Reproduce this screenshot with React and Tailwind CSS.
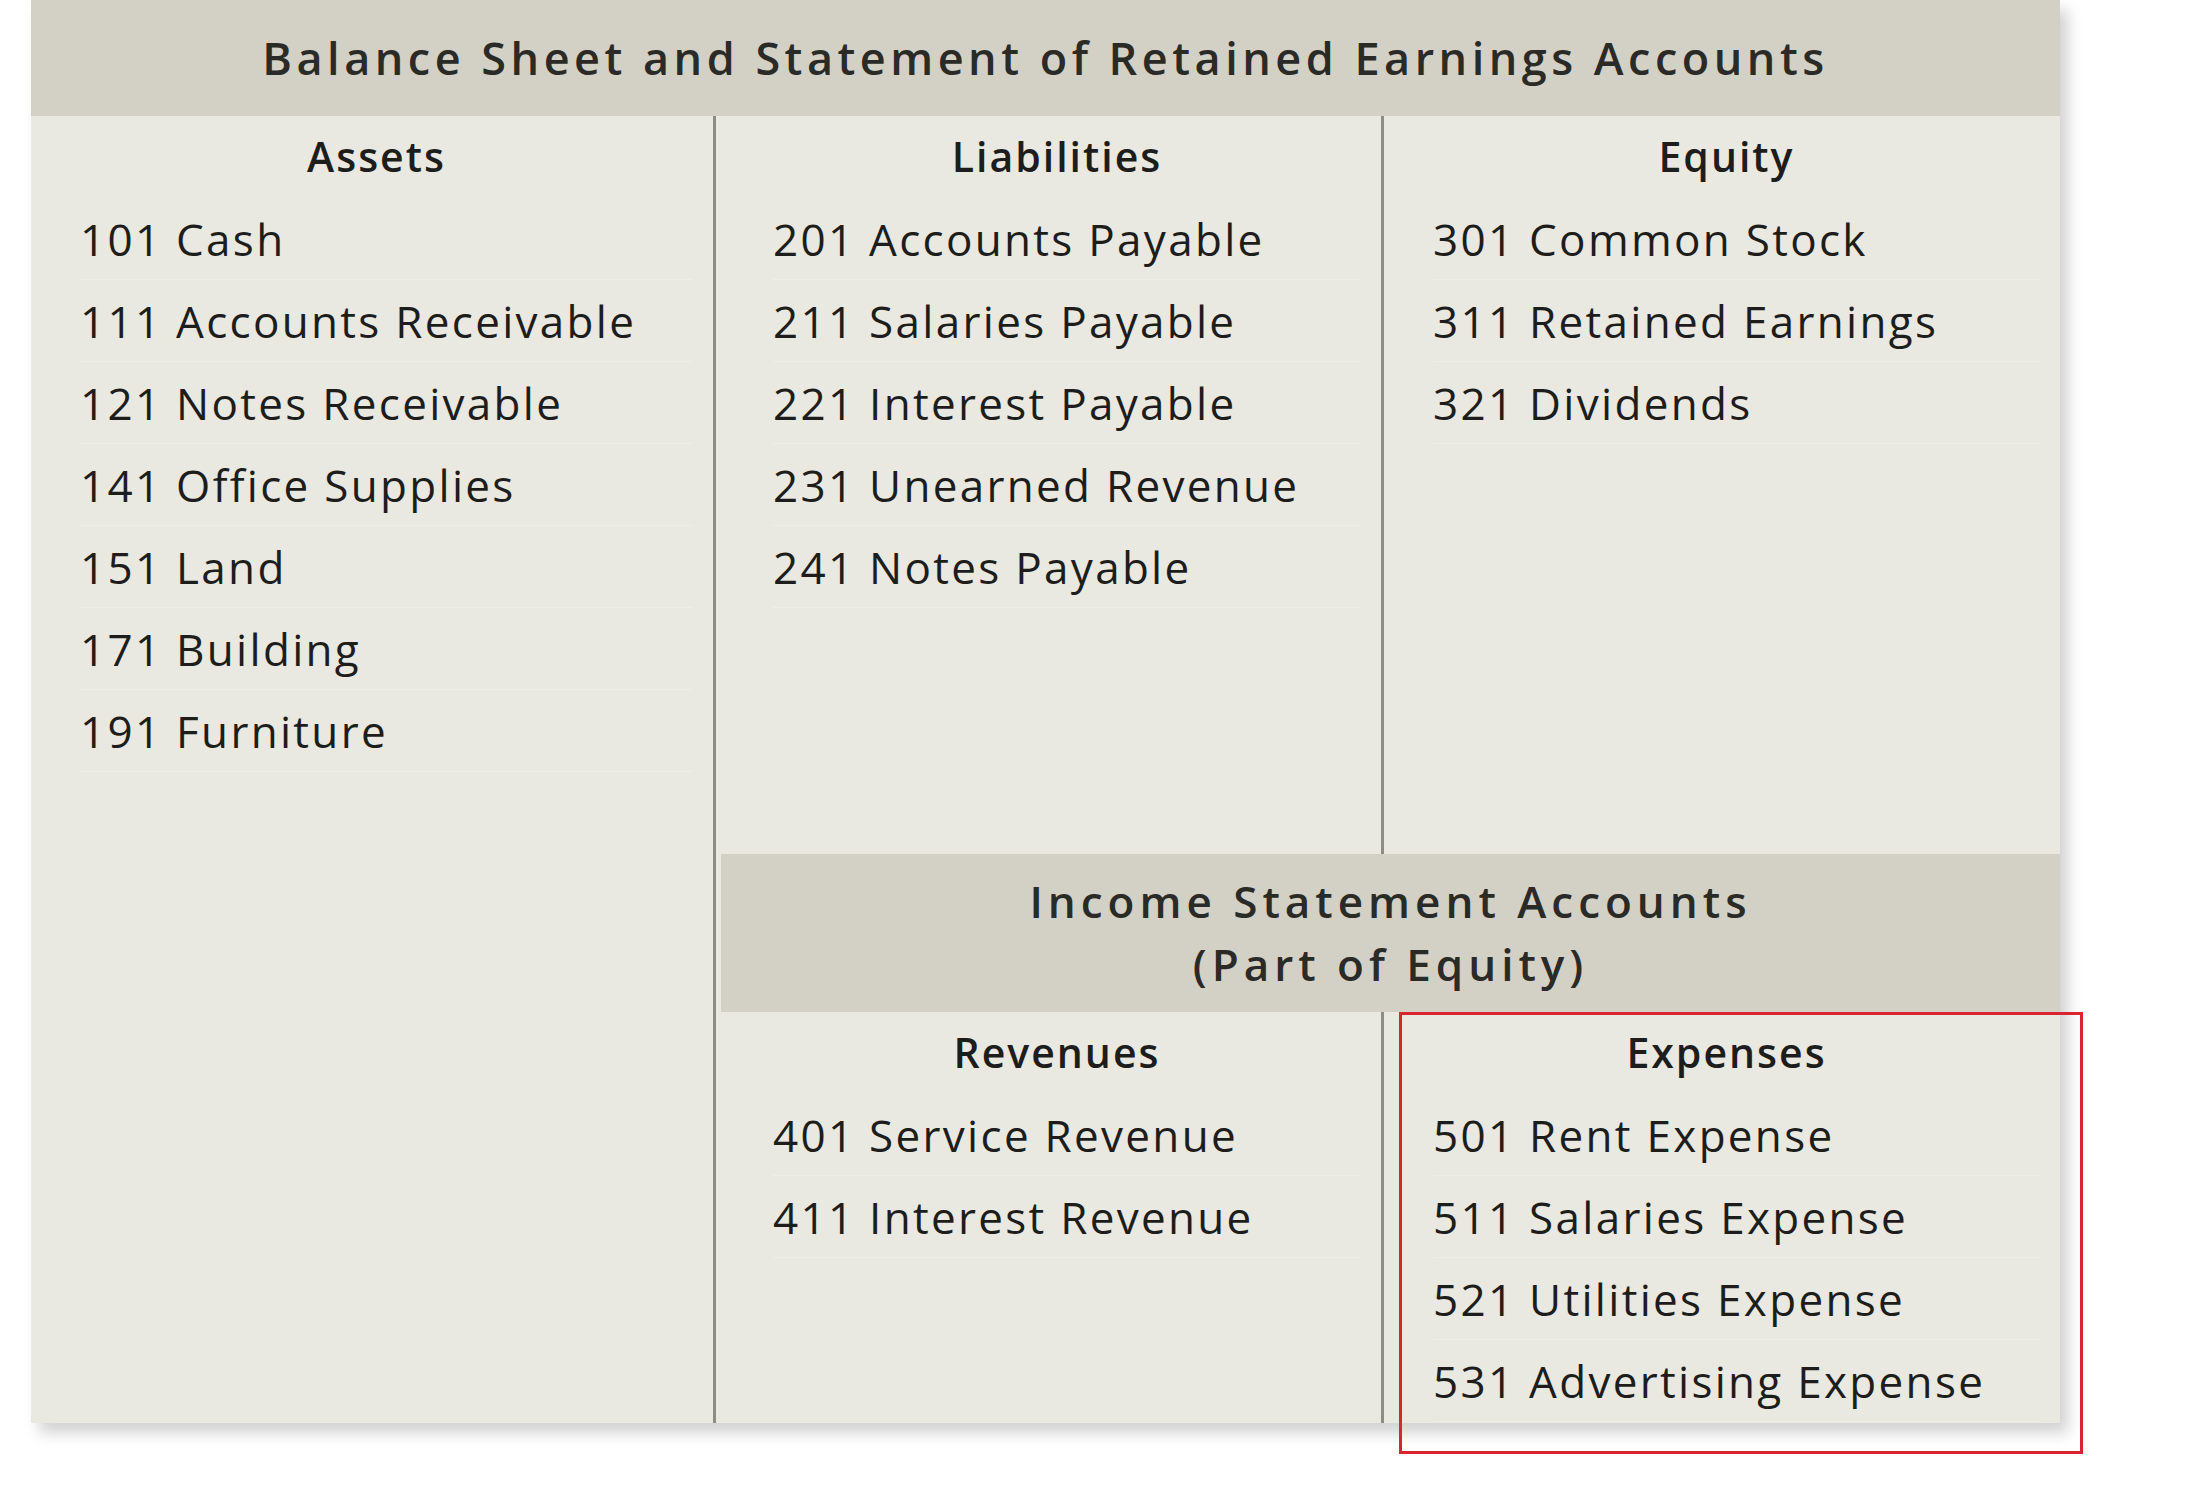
import React from "react";

const F = { fontFamily: '"Open Sans", "Noto Sans", sans-serif' };

function Col({ title, items, pl }) {
  return (
    <div className={`flex flex-col ${pl}`}>
      <div className="h-[82px] flex items-center justify-center font-semibold text-[41px] tracking-[2px] text-[#1d1d1b] pr-[20px]">{title}</div>
      {items.map((t) => (
        <div key={t} className="h-[82px] flex items-center text-[44px] tracking-[2.3px] text-[#1d1d1b] border-b border-[#eeede7]">{t}</div>
      ))}
    </div>
  );
}

export default function App() {
  return (
    <div className="w-[2210px] h-[1488px] bg-white relative" style={F}>
      <div className="absolute left-[31px] top-0 w-[2029px] shadow-[8px_10px_14px_rgba(0,0,0,0.18)] bg-[#e9e8e1]">
        <div className="h-[116px] bg-[#d3d0c6] flex items-center justify-center text-[45px] font-semibold text-[#2a2a27] tracking-[4.5px]">
          Balance Sheet and Statement of Retained Earnings Accounts
        </div>
        <div className="grid grid-cols-[685px_1344px]">
          <div className="h-[1307px] border-r-[3px] border-[#8d8c87]">
            <Col title="Assets" pl="pl-[49px] pr-[20px]" items={["101 Cash","111 Accounts Receivable","121 Notes Receivable","141 Office Supplies","151 Land","171 Building","191 Furniture"]} />
          </div>
          <div className="flex flex-col">
            <div className="h-[738px] grid grid-cols-[668px_676px]">
              <div className="border-r-[3px] border-[#8d8c87]">
                <Col title="Liabilities" pl="pl-[57px] pr-[20px]" items={["201 Accounts Payable","211 Salaries Payable","221 Interest Payable","231 Unearned Revenue","241 Notes Payable"]} />
              </div>
              <Col title="Equity" pl="pl-[49px] pr-[20px]" items={["301 Common Stock","311 Retained Earnings","321 Dividends"]} />
            </div>
            <div className="h-[158px] bg-[#d3d0c6] flex flex-col items-center justify-center text-[44px] font-semibold tracking-[5px] text-[#2a2a27] leading-[63px] ml-[5px]">
              <div>Income Statement Accounts</div>
              <div>(Part of Equity)</div>
            </div>
            <div className="h-[411px] grid grid-cols-[668px_676px]">
              <div className="border-r-[3px] border-[#8d8c87]">
                <Col title="Revenues" pl="pl-[57px] pr-[20px]" items={["401 Service Revenue","411 Interest Revenue"]} />
              </div>
              <Col title="Expenses" pl="pl-[49px] pr-[20px]" items={["501 Rent Expense","511 Salaries Expense","521 Utilities Expense","531 Advertising Expense"]} />
            </div>
          </div>
        </div>
      </div>
      <div className="absolute left-[1399px] top-[1012px] w-[684px] h-[442px] border-[3px] border-[#d9252d]" />
    </div>
  );
}
